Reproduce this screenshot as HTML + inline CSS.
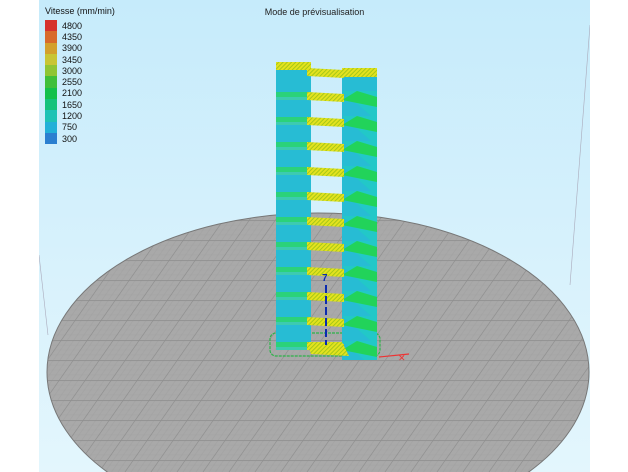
<!DOCTYPE html>
<html><head><style>
html,body{margin:0;padding:0;width:628px;height:472px;overflow:hidden;background:#fff;font-family:"Liberation Sans",sans-serif}
#v{position:absolute;left:39px;top:0;width:551px;height:472px;overflow:hidden;background:linear-gradient(#c6ebfb,#d9f2fc 60%,#e3f6fd)}
svg{display:block}
.t{position:absolute;left:0;width:551px;top:7px;text-align:center;font-size:9px;color:#222}
.lg{position:absolute;left:6px;top:6px;font-size:9px;color:#111}
.row{display:flex;align-items:center;height:11.3px}
.sw{width:12px;height:11.3px;margin-right:5px}
</style></head><body>
<div id="v">
<svg width="551" height="472" style="position:absolute;left:0;top:0">
<defs>
<pattern id="g" width="26" height="20" patternUnits="userSpaceOnUse" patternTransform="skewX(-35)">
<rect width="26" height="20" fill="#a9a9a9"/>
<path d="M0 5H26M0 10H26M0 15H26M6.5 0V20M13 0V20M19.5 0V20" stroke="#a0a0a0" stroke-width="0.5"/>
<path d="M0 0.5H26M0.5 0V20" stroke="#8e8e8e" stroke-width="0.8"/>
</pattern>
<pattern id="y" width="3" height="3" patternUnits="userSpaceOnUse" patternTransform="rotate(45)">
<rect width="3" height="3" fill="#e4e21e"/><rect width="1" height="3" fill="#a6c818"/>
</pattern>
<clipPath id="rc"><rect x="303" y="60" width="35" height="300"/></clipPath>
</defs>
<line x1="0" y1="255" x2="9" y2="335" stroke="#aab" stroke-width="0.6"/>
<line x1="551" y1="25" x2="531" y2="285" stroke="#aab" stroke-width="0.6"/>
<ellipse cx="279" cy="372" rx="271" ry="159" fill="url(#g)" stroke="#777" stroke-width="1"/>
<rect x="231" y="333" width="110" height="23" rx="6" fill="none" stroke="#2db34a" stroke-width="1.2" stroke-dasharray="3 1"/>
<line x1="340" y1="357" x2="370" y2="354" stroke="#e33" stroke-width="1.2"/>
<text x="359" y="361" font-size="9" fill="#e33">✕</text>
<rect x="237" y="62" width="35" height="285" fill="#27bcd4"/>
<rect x="303" y="68" width="35" height="292" fill="#27bcd4"/>
<g id="levels" clip-path="none"></g>
<rect x="237" y="62" width="35" height="8" fill="url(#y)"/>
<rect x="303" y="68" width="35" height="9" fill="url(#y)"/>
<polygon points="268,68 305,70 305,78 268,76" fill="url(#y)"/>
<line x1="287" y1="285" x2="287" y2="345" stroke="#0b2bb0" stroke-width="2" stroke-dasharray="8 3"/>
<text x="283" y="281" font-size="10" fill="#0b2bb0" font-weight="bold">7</text>
</svg>
<div class="t">Mode de prévisualisation</div>
<div class="lg"><div style="margin-bottom:4px">Vitesse (mm/min)</div>
<div class="row"><div class="sw" style="background:#d6322c"></div>4800</div>
<div class="row"><div class="sw" style="background:#d86a2a"></div>4350</div>
<div class="row"><div class="sw" style="background:#d3a02c"></div>3900</div>
<div class="row"><div class="sw" style="background:#c8c534"></div>3450</div>
<div class="row"><div class="sw" style="background:#8fc534"></div>3000</div>
<div class="row"><div class="sw" style="background:#3fbf3a"></div>2550</div>
<div class="row"><div class="sw" style="background:#13c04a"></div>2100</div>
<div class="row"><div class="sw" style="background:#14c27a"></div>1650</div>
<div class="row"><div class="sw" style="background:#1ec2b5"></div>1200</div>
<div class="row"><div class="sw" style="background:#21b0d8"></div>750</div>
<div class="row"><div class="sw" style="background:#2b7fd0"></div>300</div>
</div>
</div>
<script>
var g=document.getElementById('levels'),s='',r='';
for(var i=1;i<12;i++){var y=70+i*25;
 s+='<rect x="237" y="'+(y-3)+'" width="35" height="5" fill="#2bd27a"/>';
 s+='<rect x="237" y="'+(y+2)+'" width="35" height="3" fill="#3ccbb0"/>';
 r+='<polygon points="303,'+(y-4)+' 338,'+(y-4)+' 338,'+(y+26)+'" fill="#22c8c8"/>';
 r+='<polygon points="303,'+(y+5)+' 318,'+(y-4)+' 338,'+(y+2)+' 338,'+(y+12)+'" fill="#22d35a"/>';
 s+='<polygon points="268,'+(y-3)+' 305,'+(y-1)+' 305,'+(y+7)+' 268,'+(y+5)+'" fill="url(#y)"/>';
}
s+='<polygon points="268,342 303,342 310,356 272,354" fill="url(#y)"/>';
g.innerHTML='<g clip-path="url(#rc)">'+r+'</g>'+s;
</script>
</body></html>
